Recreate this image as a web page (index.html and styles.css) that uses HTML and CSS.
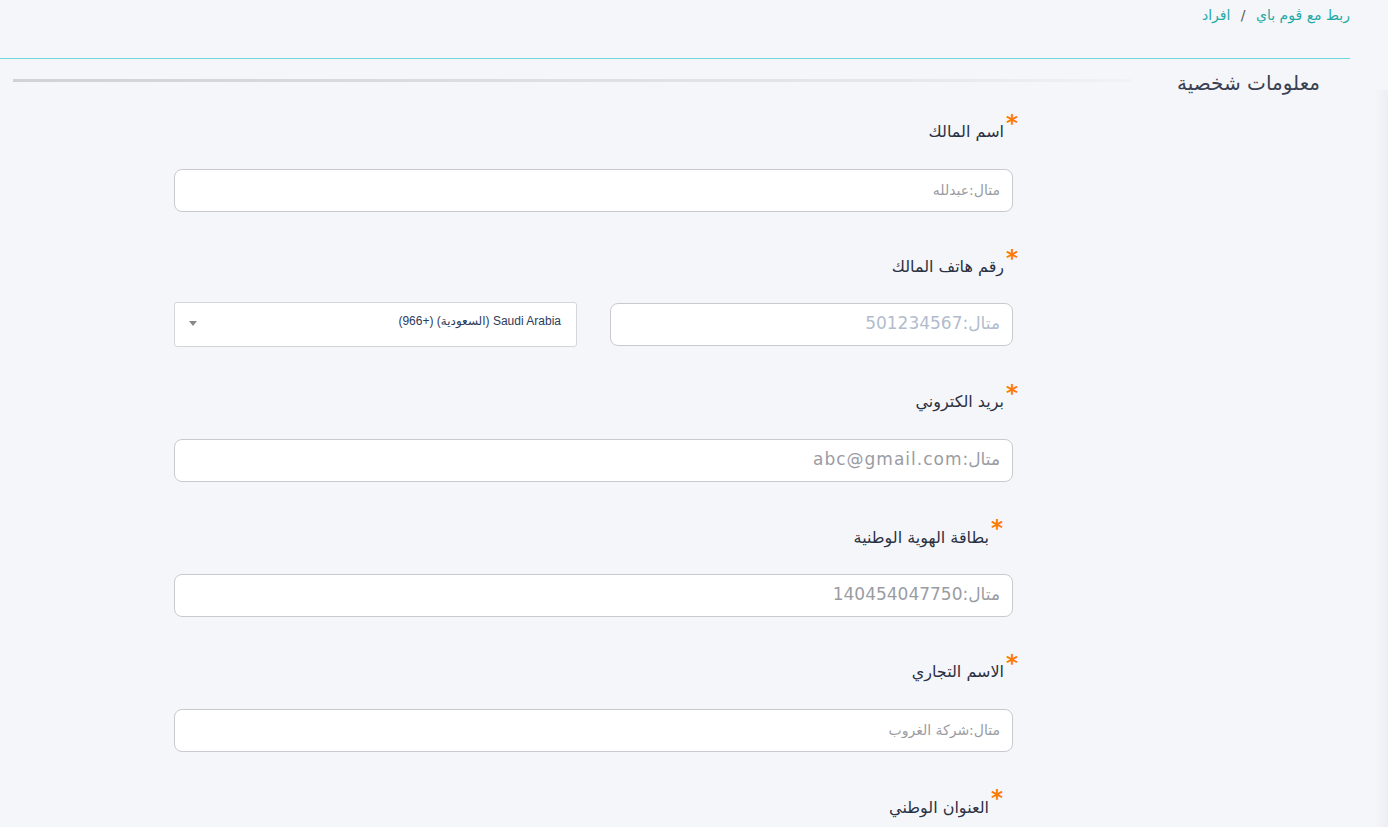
FILE: index.html
```html
<!DOCTYPE html>
<html lang="ar" dir="rtl">
<head>
    <meta charset="utf-8">
    <title>معلومات شخصية</title>
    <link rel="stylesheet" href="styles.css">
</head>
<body>
    <div class="page">
        <div class="breadcrumb">
            <a href="#">ربط مع ڤوم باي</a>
            <span class="sep">/</span>
            <a href="#">افراد</a>
        </div>
        <div class="top-line"></div>

        <div class="section-head">
            <h2>معلومات شخصية</h2>
            <div class="fade-line"></div>
        </div>

        <form class="form">
            <div class="field">
                <label class="req">اسم المالك</label>
                <input type="text" class="txt ar" placeholder="متال:عبدلله">
            </div>

            <div class="field">
                <label class="req">رقم هاتف المالك</label>
                <div class="phone-row">
                    <input type="text" class="txt num light" placeholder="متال:501234567">
                    <div class="country">
                        <span class="country-name">Saudi Arabia (السعودية) (+966)</span>
                        <span class="caret"></span>
                    </div>
                </div>
            </div>

            <div class="field">
                <label class="req">بريد الكتروني</label>
                <input type="text" class="txt num" placeholder="متال:abc@gmail.com">
            </div>

            <div class="field">
                <label class="req shifted">بطاقة الهوية الوطنية</label>
                <input type="text" class="txt num" placeholder="متال:140454047750">
            </div>

            <div class="field">
                <label class="req">الاسم التجاري</label>
                <input type="text" class="txt ar" placeholder="متال:شركة الغروب">
            </div>

            <div class="field last">
                <label class="req shifted">العنوان الوطني</label>
            </div>
        </form>
    </div>
</body>
</html>
```

FILE: styles.css
```css
* {
    box-sizing: border-box;
}

body {
    margin: 0;
    background-color: #f5f6fa;
    font-family: "DejaVu Sans", "Noto Sans", sans-serif;
    color: #2f3747;
    height: 827px;
    overflow: hidden;
}

.page {
    position: relative;
    padding-right: 38px;
}

.page::after {
    content: "";
    position: absolute;
    top: 90px;
    left: 1374px;
    width: 14px;
    height: 740px;
    background: linear-gradient(to right, rgba(230, 232, 238, 0), #eceef3);
}

.breadcrumb {
    height: 58px;
    padding-top: 7px;
    font-size: 14px;
    color: #1eaaa6;
}

.breadcrumb a {
    color: #1eaaa6;
    text-decoration: none;
}

.breadcrumb .sep {
    color: #555;
    margin: 0 6px;
}

.top-line {
    height: 1px;
    background-color: #6fd8dc;
}

.section-head {
    display: flex;
    align-items: center;
    padding-right: 30px;
    margin-top: 10px;
}

.section-head h2 {
    margin: 0;
    font-size: 20px;
    font-weight: normal;
    color: #3a4152;
    white-space: nowrap;
    padding-left: 46px;
    padding-top: 2px;
}

.fade-line {
    height: 3px;
    width: 1118px;
    margin-bottom: 4px;
    background: linear-gradient(to left, rgba(232, 233, 236, 0.3), #e6e7ea 20%, #d0d2d8);
}

.form {
    width: 839px;
    margin-right: 337px;
    margin-top: 17px;
}

.field {
    height: 135px;
}

.field.last {
    height: 60px;
}

.field label {
    display: block;
    position: relative;
    width: max-content;
    margin-right: 9px;
    padding-top: 10px;
    height: 57px;
    font-size: 16px;
    font-weight: normal;
    color: #2a3142;
}

.field label.shifted {
    margin-right: 24px;
    padding-top: 11px;
}

.req::before {
    content: "*";
    position: absolute;
    right: -14px;
    top: -2px;
    font-size: 23px;
    font-weight: bold;
    color: #ff7a00;
}

.txt {
    display: block;
    width: 100%;
    height: 43px;
    padding: 0 12px;
    border: 1px solid #c8cacf;
    border-radius: 8px;
    background-color: #fff;
    font-family: "DejaVu Sans", sans-serif;
    direction: rtl;
}

.txt.ar::placeholder {
    font-size: 14px;
    color: #9a9ca3;
    letter-spacing: 0.5px;
}

.txt.num::placeholder {
    font-size: 17px;
    color: #9a9ca3;
    letter-spacing: 1px;
}

.txt.light::placeholder {
    color: #b1bccd;
}

.phone-row {
    display: flex;
    gap: 33px;
    margin-top: -2px;
}

.phone-row .txt {
    width: 403px;
    margin-top: 1px;
}

.country {
    width: 403px;
    height: 45px;
    display: flex;
    align-items: flex-start;
    justify-content: space-between;
    padding: 11px 15px 0 14px;
    border: 1px solid #d4d6db;
    border-radius: 3px;
    background-color: #fff;
}

.country-name {
    font-family: "Liberation Sans", "DejaVu Sans", sans-serif;
    font-size: 12px;
    color: #2d3a5a;
}

.caret {
    margin-top: 7px;
    border-left: 4px solid transparent;
    border-right: 4px solid transparent;
    border-top: 5px solid #888;
}
```
